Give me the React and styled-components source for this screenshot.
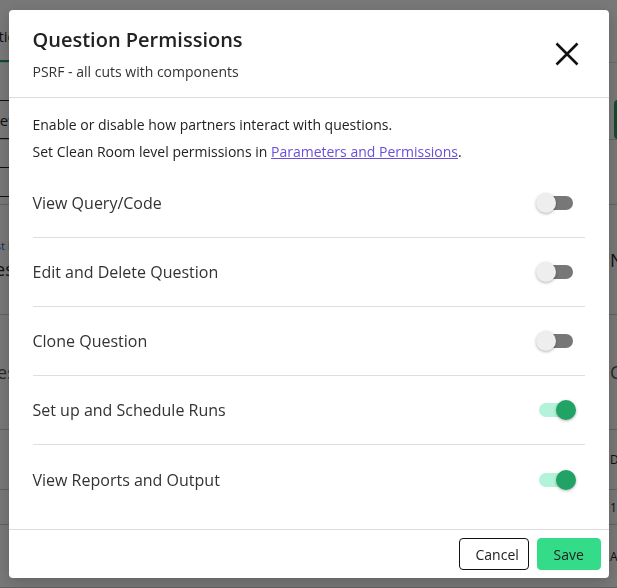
import React, { useState } from "react";
import styled, { createGlobalStyle, css } from "styled-components";

const GlobalStyle = createGlobalStyle`
  html, body {
    margin: 0;
    padding: 0;
    width: 617px;
    height: 588px;
    overflow: hidden;
    background: #ffffff;
    font-family: "Open Sans", "Noto Sans", sans-serif;
  }
  * { box-sizing: border-box; }
`;

const permissionsList = [
  { id: "query", label: "View Query/Code", enabled: false },
  { id: "edit", label: "Edit and Delete Question", enabled: false },
  { id: "clone", label: "Clone Question", enabled: false },
  { id: "schedule", label: "Set up and Schedule Runs", enabled: true },
  { id: "reports", label: "View Reports and Output", enabled: true },
];

// rows of the page behind the dialog; only their edges show
const bgRows = [
  { height: 110, left: "Results", right: "Name", kicker: "Last Run" },
  { height: 115, left: "Description", right: "Config", muted: true },
  { height: 60, left: "", right: "Driver", small: true },
  { height: 35, left: "", right: "1530", small: true },
  { height: 63, left: "", right: "Account", small: true },
];

const ToggleSwitch = ({ checked, onChange }) => (
  <SwitchRoot
    type="button"
    role="switch"
    aria-checked={checked}
    onClick={() => onChange(!checked)}
  >
    <SwitchTrack $on={checked} />
    <SwitchThumb $on={checked} />
  </SwitchRoot>
);

const CloseIcon = () => (
  <svg width="24" height="24" viewBox="0 0 24 24" fill="none">
    <path
      d="M1.5 1.5 L22.5 22.5 M22.5 1.5 L1.5 22.5"
      stroke="#111"
      strokeWidth="2.6"
    />
  </svg>
);

const App = () => {
  const [perms, setPerms] = useState(permissionsList);

  const toggle = (id, value) =>
    setPerms((prev) =>
      prev.map((p) => (p.id === id ? { ...p, enabled: value } : p))
    );

  return (
    <>
      <GlobalStyle />
      <Page aria-hidden="true">
        <TabBar>
          <Tab $active>Questions</Tab>
        </TabBar>
        <Toolbar>
          <OutlineBox>View</OutlineBox>
          <GreenBlock />
        </Toolbar>
        <SearchBox />
        <Table>
          {bgRows.map((row, i) => (
            <BgRow key={i} $height={row.height}>
              <BgLeft>
                {row.kicker && <Kicker>{row.kicker}</Kicker>}
                {row.left && <BgText $muted={row.muted}>{row.left}</BgText>}
              </BgLeft>
              <BgText $small={row.small} $muted={row.muted}>
                {row.right}
              </BgText>
            </BgRow>
          ))}
        </Table>
      </Page>

      <Overlay>
        <Modal role="dialog" aria-modal="true">
          <Header>
            <HeaderText>
              <Title>Question Permissions</Title>
              <Subtitle>PSRF - all cuts with components</Subtitle>
            </HeaderText>
            <CloseButton aria-label="Close">
              <CloseIcon />
            </CloseButton>
          </Header>

          <Body>
            <Intro>Enable or disable how partners interact with questions.</Intro>
            <Intro>
              Set Clean Room level permissions in{" "}
              <Link href="#">Parameters and Permissions</Link>.
            </Intro>

            <List>
              {perms.map((p) => (
                <PermissionRow key={p.id}>
                  <RowLabel>{p.label}</RowLabel>
                  <ToggleSwitch
                    checked={p.enabled}
                    onChange={(v) => toggle(p.id, v)}
                  />
                </PermissionRow>
              ))}
            </List>
          </Body>

          <Footer>
            <Button $variant="outline">Cancel</Button>
            <Button $variant="primary">Save</Button>
          </Footer>
        </Modal>
      </Overlay>
    </>
  );
};

export default App;

/* background page */

const Page = styled.div`
  width: 720px;
  margin-left: -52px;
  display: flex;
  flex-direction: column;
  color: #222;
`;

const TabBar = styled.div`
  height: 63px;
  display: flex;
  align-items: flex-end;
  padding-left: 14px;
  border-bottom: 1px solid #e2e2e2;
`;

const Tab = styled.div`
  font-size: 15px;
  line-height: 20px;
  padding: 0 0 14px;
  ${(p) =>
    p.$active &&
    css`
      border-bottom: 2px solid #1f9f5f;
    `}
`;

const Toolbar = styled.div`
  margin-top: 37px;
  height: 40px;
  display: grid;
  grid-template-columns: 666px 1fr;
  align-items: stretch;
  border-bottom: 1px solid #cfcfcf;
`;

const OutlineBox = styled.div`
  width: 140px;
  display: flex;
  align-items: center;
  padding-left: 39px;
  font-size: 15px;
  border-top: 1px solid #222;
  border-bottom: 1px solid #222;
`;

const GreenBlock = styled.div`
  width: 90px;
  background: #21a366;
  border-radius: 4px;
`;

const SearchBox = styled.div`
  width: 140px;
  height: 30px;
  margin-top: 27px;
  border-top: 1px solid #222;
  border-bottom: 1px solid #222;
`;

const Table = styled.div`
  margin-top: 7px;
  display: flex;
  flex-direction: column;
  border-top: 1px solid #d0d0d0;
`;

const BgRow = styled.div`
  height: ${(p) => p.$height}px;
  display: grid;
  grid-template-columns: 662px 1fr;
  align-items: center;
  border-bottom: 1px solid #cfcfcf;
`;

const BgLeft = styled.div`
  display: flex;
  flex-direction: column;
  gap: 4px;
  padding-left: 36px;
`;

const Kicker = styled.span`
  font-size: 11px;
  color: #1a5fb4;
`;

const BgText = styled.span`
  white-space: nowrap;
  font-size: ${(p) => (p.$small ? 12 : 18)}px;
  color: ${(p) => (p.$muted ? "#555" : "#222")};
`;

/* dialog */

const Overlay = styled.div`
  position: fixed;
  inset: 0;
  background: rgba(0, 0, 0, 0.53);
  display: flex;
  align-items: center;
  justify-content: center;
`;

const Modal = styled.div`
  width: 600px;
  height: 568px;
  background: #fff;
  border-radius: 4px;
  display: flex;
  flex-direction: column;
  color: #222;
  box-shadow: 0 4px 16px rgba(0, 0, 0, 0.2);
`;

const Header = styled.div`
  display: flex;
  align-items: center;
  justify-content: space-between;
  padding: 16px 30px 15px 24px;
  border-bottom: 1px solid #dddddd;
`;

const HeaderText = styled.div`
  display: flex;
  flex-direction: column;
  gap: 8px;
`;

const Title = styled.h2`
  margin: 0;
  font-size: 20px;
  line-height: 28px;
  font-weight: 600;
  color: #222;
`;

const Subtitle = styled.div`
  font-size: 14px;
  line-height: 20px;
  color: #333;
`;

const CloseButton = styled.button`
  border: none;
  background: none;
  padding: 0;
  width: 24px;
  height: 24px;
  display: flex;
  cursor: pointer;
`;

const Body = styled.div`
  flex: 1;
  padding: 17px 24px 0;
  display: flex;
  flex-direction: column;
`;

const Intro = styled.p`
  margin: 0 0 7px;
  font-size: 14px;
  line-height: 20px;
  color: #222;
`;

const Link = styled.a`
  color: #6a4fd8;
  text-decoration: underline;
`;

const List = styled.div`
  display: flex;
  flex-direction: column;
`;

const PermissionRow = styled.div`
  height: 69px;
  display: flex;
  align-items: center;
  justify-content: space-between;
  border-bottom: 1px solid #dedede;
  &:last-child {
    border-bottom: none;
  }
`;

const RowLabel = styled.span`
  font-size: 16px;
  color: #333;
`;

const SwitchRoot = styled.button`
  position: relative;
  width: 40px;
  height: 22px;
  margin-right: 9px;
  border: none;
  background: none;
  padding: 0;
  cursor: pointer;
`;

const SwitchTrack = styled.span`
  position: absolute;
  left: 3px;
  right: 3px;
  top: 4px;
  height: 14px;
  border-radius: 7px;
  background: ${(p) => (p.$on ? "#b2f3d9" : "#777777")};
`;

const SwitchThumb = styled.span`
  position: absolute;
  top: 1px;
  left: ${(p) => (p.$on ? "20px" : "0")};
  width: 20px;
  height: 20px;
  border-radius: 50%;
  background: ${(p) => (p.$on ? "#21a366" : "#eeeeee")};
  box-shadow: 0 1px 3px rgba(0, 0, 0, 0.3);
`;

const Footer = styled.div`
  display: flex;
  justify-content: flex-end;
  gap: 8px;
  padding: 8px 8px 8px;
  border-top: 1px solid #dddddd;
`;

const Button = styled.button`
  height: 32px;
  padding: 0 16px;
  border-radius: 4px;
  font-family: "Open Sans", "Noto Sans", sans-serif;
  font-size: 14px;
  color: #222;
  cursor: pointer;
  ${(p) =>
    p.$variant === "primary"
      ? css`
          background: #34dc8a;
          border: 1px solid #34dc8a;
          width: 64px;
        `
      : css`
          background: #fff;
          border: 1px solid #111;
          width: 70px;
        `}
`;
